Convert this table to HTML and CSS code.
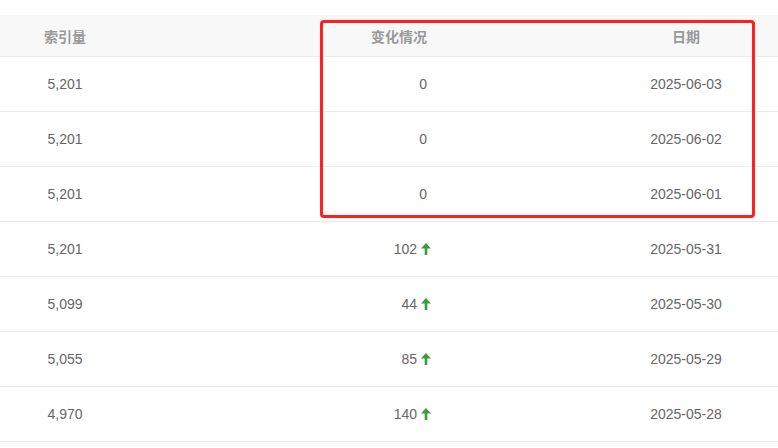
FILE: index.html
```html
<!DOCTYPE html>
<html lang="zh-CN">
<head>
    <meta charset="UTF-8">
    <meta name="viewport" content="width=device-width, initial-scale=1.0">
    <title>索引量变化</title>
    <link rel="stylesheet" href="styles.css">
</head>
<body>
    <div class="pagina">
        <div class="tabela">
            <div class="linha cabeca">
                <div class="col1">索引量</div>
                <div class="col2">变化情况</div>
                <div class="col3">日期</div>
            </div>
            <div class="linha">
                <div class="col1">5,201</div>
                <div class="col2">0</div>
                <div class="col3">2025-06-03</div>
            </div>
            <div class="linha">
                <div class="col1">5,201</div>
                <div class="col2">0</div>
                <div class="col3">2025-06-02</div>
            </div>
            <div class="linha">
                <div class="col1">5,201</div>
                <div class="col2">0</div>
                <div class="col3">2025-06-01</div>
            </div>
            <div class="linha">
                <div class="col1">5,201</div>
                <div class="col2">102<svg class="seta" viewBox="0 0 10 12"><path d="M5 0 L10 5.5 H6.3 V12 H3.7 V5.5 H0 Z"/></svg></div>
                <div class="col3">2025-05-31</div>
            </div>
            <div class="linha">
                <div class="col1">5,099</div>
                <div class="col2">44<svg class="seta" viewBox="0 0 10 12"><path d="M5 0 L10 5.5 H6.3 V12 H3.7 V5.5 H0 Z"/></svg></div>
                <div class="col3">2025-05-30</div>
            </div>
            <div class="linha">
                <div class="col1">5,055</div>
                <div class="col2">85<svg class="seta" viewBox="0 0 10 12"><path d="M5 0 L10 5.5 H6.3 V12 H3.7 V5.5 H0 Z"/></svg></div>
                <div class="col3">2025-05-29</div>
            </div>
            <div class="linha">
                <div class="col1">4,970</div>
                <div class="col2">140<svg class="seta" viewBox="0 0 10 12"><path d="M5 0 L10 5.5 H6.3 V12 H3.7 V5.5 H0 Z"/></svg></div>
                <div class="col3">2025-05-28</div>
            </div>
        </div>
        <div class="destaque"></div>
    </div>
</body>
</html>
```

FILE: styles.css
```css
body {
    margin: 0;
    background: #fff;
    font-family: "Liberation Sans", "Noto Sans CJK SC", sans-serif;
    font-size: 14px;
    color: #666;
}
.pagina {
    position: relative;
    padding-top: 15px;
    width: 778px;
    height: 433px;
    overflow: hidden;
}
.linha {
    display: grid;
    grid-template-columns: 130px 297px 1fr;
    align-items: center;
    height: 54px;
    border-bottom: 1px solid #ebebeb;
}
.cabeca {
    height: 41px;
    background: #f8f8f8;
    color: #999;
    font-weight: bold;
}
.col1 {
    text-align: center;
}
.col2 {
    text-align: right;
}
.col3 {
    text-align: center;
    padding-left: 167px;
}
.seta {
    display: inline-block;
    width: 10px;
    height: 12px;
    margin-left: 4px;
    margin-right: -4px;
    vertical-align: -1px;
    fill: #3c9a3c;
}
.destaque {
    position: absolute;
    left: 320px;
    top: 20px;
    width: 429px;
    height: 192px;
    border: 3px solid #ff1f1f;
    border-radius: 4px;
}
```
